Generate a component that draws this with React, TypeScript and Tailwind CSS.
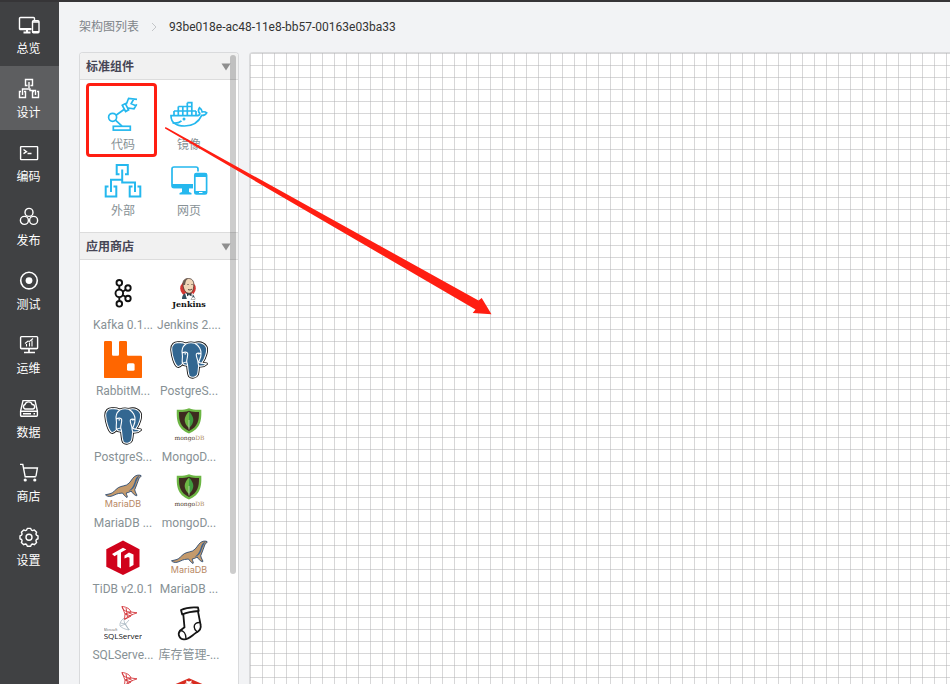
import { useState } from "react";
import type { ReactNode } from "react";

/* ---------- sidebar icons (22 x 22) ---------- */

function NavSvg({ children }: { children: ReactNode }) {
  return (
    <svg viewBox="0 0 22 22" className="h-[22px] w-[22px]" fill="none" stroke="#fff" strokeWidth="1.4" aria-hidden="true">
      {children}
    </svg>
  );
}

const OverviewIcon = () => (
  <NavSvg>
    <path d="M13 15.5H2.5a1 1 0 0 1-1-1V4.500a1 1 0 0 1 1-1h13a1 1 0 0 1 1 1V6" />
    <path d="M2 15h11.500M9 15v3M5.500 18.500h7" strokeWidth="2" />
    <rect x="14.500" y="6.700" width="6.500" height="12" rx="1" />
    <path d="M15 8h6M15 17.600h6" />
  </NavSvg>
);

const DesignIcon = () => (
  <NavSvg>
    <path d="M9.500 7.500h-2v-6h7v6h-2M11 4v6M4.500 17v-6h7.500v1.500h5.500V17" />
    <path d="M3 13.500H1.500v6h6v-6H6M16 13.500h-1.500v6h6v-6H19" />
  </NavSvg>
);

const CodeIcon = () => (
  <NavSvg>
    <rect x="2.600" y="4.600" width="17" height="13" rx="0.500" />
    <path d="M5.500 7.500l3 2.200-3 2M9.500 11.500h4" />
  </NavSvg>
);

const ReleaseIcon = () => (
  <NavSvg>
    <circle cx="11" cy="6.400" r="4" />
    <circle cx="6.400" cy="14.400" r="4" />
    <circle cx="15.600" cy="14.400" r="4" />
  </NavSvg>
);

const TestIcon = () => (
  <NavSvg>
    <circle cx="11" cy="10.600" r="8.300" strokeWidth="1.600" />
    <circle cx="11" cy="10.600" r="3.400" fill="#fff" stroke="none" />
  </NavSvg>
);

const OpsIcon = () => (
  <NavSvg>
    <rect x="2.600" y="2.600" width="17" height="12" rx="0.800" />
    <path d="M3 14.500h16M11 15v3M6 18.500h11" strokeWidth="1.700" />
    <path d="M8.500 12.500v-2.500M11.500 12.500V8.500M14 12.500V6.500M7 9.500l3-2.500 1.500.5L15 4.500" strokeWidth="1.100" />
  </NavSvg>
);

const DataIcon = () => (
  <NavSvg>
    <path d="M5 2.600h12l2.400 10.400v4.200a1 1 0 0 1-1 1H3.600a1 1 0 0 1-1-1V13z" />
    <path d="M2.800 13.300h16.400M5 15.800h8M15.500 15.800h1.500" />
    <path d="M7 11a2.400 2.400 0 0 1 0-4.500 3.800 3.800 0 0 1 7.200 0A2.300 2.300 0 0 1 15 11z" />
  </NavSvg>
);

const CartIcon = () => (
  <NavSvg>
    <path d="M2 2.400h2.800l2.400 12.400h10.600M5.800 6h13.600l-1.500 8.500" />
    <circle cx="7.200" cy="18" r="1.600" fill="#fff" stroke="none" />
    <circle cx="16.800" cy="18" r="1.600" fill="#fff" stroke="none" />
  </NavSvg>
);

const GearIcon = () => (
  <NavSvg>
    <path
      d="M9.300 2.400h3.400l.7 1.700 1.200.5 1.700-.7 2.300 2.300-.7 1.700.5 1.200 1.600.7v3l-1.600.7-.5 1.200.7 1.700-2.300 2.300-1.700-.7-1.200.5-.7 1.700H9.300l-.7-1.700-1.200-.5-1.700.7-2.300-2.300.7-1.700-.5-1.200-1.600-.7v-3l1.600-.7.5-1.200-.7-1.700 2.300-2.300 1.700.7 1.200-.5z"
      strokeLinejoin="round"
    />
    <circle cx="11" cy="11.200" r="3" />
  </NavSvg>
);

/* ---------- component icons (38 x 38) ---------- */

function Art({ children }: { children: ReactNode }) {
  return (
    <svg viewBox="0 0 38 38" className="h-[38px] w-[38px]" fill="none" aria-hidden="true">
      {children}
    </svg>
  );
}

const RobotArm = () => (
  <Art>
    <g stroke="#25b8ee" strokeWidth="1.700">
      <rect x="9.300" y="31.300" width="17" height="3.800" />
      <circle cx="8.600" cy="22.300" r="4" />
      <path d="M11.500 25.200l6.500 6M12 20.200l8-5.700" />
      <path d="M18.300 10.300l3-1.700 3.300 6.200-3 1.700z" />
      <path d="M22.300 9.300L24.600 3.300l8.400 1M24 13l6 .8 2.700-4.500M29.500 4.500l-2.300 4.200 4.600 2" />
    </g>
  </Art>
);

const Docker = () => (
  <Art>
    <g stroke="#25b8ee" strokeWidth="1.700">
      <path d="M4 16h22M8.300 11.500h13.500M17.300 7.700h4.500v12.500M17.300 7.700v12.500M12.800 11.500v8.700M8.300 11.500v8.700M4 16v4.500M26 16v4.500" />
      <path d="M1 20.700h25.500c2.200 0 3.300-1 3.300-2.300-1.500-1.600-1.500-4-.3-5.700 2 1.300 2.500 2.700 2.700 4.300 1.500-.4 3.300-.2 4.500.8-1 2-3 2.700-5 2.600C28.500 27.500 22.500 31 14.500 31 6 31 1 27.300 1 20.700z" />
      <path d="M2.500 28c4 .5 7-.4 9-2.200" />
    </g>
    <circle cx="14" cy="23.900" r="1.500" fill="#25b8ee" />
  </Art>
);

const Network = () => (
  <Art>
    <g stroke="#25b8ee" strokeWidth="2">
      <path d="M15.500 13.300H12.700V4h11.100v9.300H21M18.200 8.500V21.500H31V31M18.200 18.700H7V31" />
      <path d="M4.500 25.500H1.700v10h10.600v-10H9.500M28.500 25.500h-2.800v10h10.600v-10H33.500" />
    </g>
  </Art>
);

const WebPage = () => (
  <Art>
    <path d="M23 26.500H4A2 2 0 0 1 2 24.500V8a2 2 0 0 1 2-2h22a2 2 0 0 1 2 2v2.500" stroke="#25b8ee" strokeWidth="1.700" />
    <path d="M2 23h21v4.300H3.500L2 26zM12 27h7v4l2.500 1v1.500h-12V32l2.500-1z" fill="#25b8ee" />
    <rect x="24.800" y="12.500" width="11.800" height="20.500" rx="1.500" stroke="#25b8ee" strokeWidth="1.700" />
    <path d="M25 12.500h11.500v3.500H25zM25 30h11.500v3H25z" fill="#25b8ee" />
    <path d="M29 31.500h3.500" stroke="#fff" />
  </Art>
);

const Kafka = () => (
  <Art>
    <g stroke="#111" strokeWidth="1.900">
      <path d="M15.300 11v3M15.300 22.500v3M19 16.500l2.500-1.700M19 20.200l2.500 1.600" />
      <circle cx="15.300" cy="7.800" r="2.800" />
      <circle cx="15.300" cy="18.300" r="3.800" />
      <circle cx="15.300" cy="28.800" r="2.800" />
      <circle cx="24" cy="13" r="2.700" />
      <circle cx="24" cy="23.500" r="2.700" />
    </g>
  </Art>
);

const Jenkins = () => (
  <Art>
    <circle cx="18" cy="13.500" r="7.800" fill="#d33833" />
    <path d="M12 24c0-4 2-6 6-6s6.500 2 7 6z" fill="#335061" />
    <path d="M13 9.500C12.500 5.500 15 3.500 18.500 3.500s5.500 2.500 5.300 6.500c-.1 4.500-1.500 8-4.500 8.300-3.800.2-6-4-6.300-8.800z" fill="#f0d6b7" stroke="#4b3a34" strokeWidth=".8" />
    <path d="M13 10c-.5-4 2-6.700 5.500-6.500-2.500 1-3 3-3.500 6.500z" fill="#6b5a50" />
    <path d="M17.500 9.500h1M21.500 9.500h1M18 14.500c1.500.8 3 .5 4-.5" stroke="#3b2b26" strokeWidth=".9" />
    <path d="M15 18l4 2 4-2-1 6.500h-5z" fill="#fff" />
    <path d="M17 18.500l2 1.200 2.500-1.400v2.900L19 20l-2 1.200z" fill="#28323a" />
    <path d="M22 22.500c2-1 3.500 0 3 2h-4z" fill="#fff" stroke="#555" strokeWidth=".4" />
    <text x="19" y="32" textAnchor="middle" fill="#111" className="font-['DejaVu_Serif',serif] text-[8px] font-bold">Jenkins</text>
  </Art>
);

const Rabbit = () => (
  <Art>
    <path d="M1.200 0h5.600Q8 0 8 1.200v12.300q0 1.200 1.200 1.200h4.600q1.200 0 1.200-1.200V1.200Q15 0 16.200 0h5.600Q23 0 23 1.200v12.300q0 1.200 1.200 1.200h12.600q1.200 0 1.200 1.200v20q0 1.200-1.200 1.200H1.200Q0 37.100 0 35.900V1.200Q0 0 1.200 0z" fill="#ff6600" />
    <rect x="23" y="22.300" width="7.600" height="7.400" rx="1.500" fill="#fff" />
  </Art>
);

const elephant =
  "M9 1.700C4.500 1.200 1.500 3.500 1.700 9c.4 6 3 14.500 5.800 16.300C9.300 26 11 24.500 12.500 22.500c1 1.500 3.500 1.800 5 1.600.6 3.900.5 8.900 2 11 2 2 6.500 1.500 8-1.600.9-3 .7-6 1.200-8.500 3 .5 6-.3 7.800-2.200-1.500-.4-3.500.1-4.700-.8 3.700-5 6-13 4.200-16.300C33 1.300 28.500 1.200 24.700 2.300c-3-.8-6.200-.6-8.900.7C13.500 2 11 1.500 9 1.700z";

const Postgres = () => (
  <Art>
    <path d={elephant} fill="#000" stroke="#111" strokeWidth="2.800" strokeLinejoin="round" />
    <path d={elephant} fill="#336791" stroke="#fff" strokeWidth="1.100" />
    <path
      d="M15.800 3C12 6 11.500 10 12.300 13.500c.7 3-.8 6 .2 9M12.300 12c2-1.300 4.700-1.200 5.300.2.700 3-1.100 5.800-.9 8.300.2 1.600.8 2.600.8 3.600M12.500 22.500c1.500-1 2.700-1.500 4-1.500M24.700 2.300C29 4.500 31.500 9 31 13c-2-1.300-4.300-1-4.700.2-.5 2.800 1.700 5.300 1.700 8 0 1.500.5 2.500.7 3.800M31 13c.3 3.500-2 6-2.200 8.200 1.200 1.200 2 .8 3.200 1"
      stroke="#fff"
      strokeWidth="1.100"
    />
    <path d="M14.500 12.800h1.500M28 12.900h1.500" stroke="#fff" strokeWidth="1.300" />
  </Art>
);

const Mongo = () => (
  <Art>
    <path d="M19 1.300c4 1.500 8 1.700 12.300 1.400.3 10-.3 18.800-12.300 23.800C7 21.500 6.500 12.700 6.800 2.700 11 3 15 2.800 19 1.300z" fill="#6cb644" />
    <path d="M19 3.700c3.500 1.200 6.500 1.400 10 1.300.1 8.500-1 14.700-10 19-9-4.300-10.200-10.500-10-19 3.500.1 6.500-.1 10-1.300z" fill="#3d2b1f" />
    <path d="M19 4.500c-5.500 5.500-6 11 0 16.500z" fill="#6cb644" />
    <path d="M19 4.500c5.500 5.500 6 11 0 16.500z" fill="#3f9a3f" />
    <path d="M19 13v9.500" stroke="#c8d8b8" strokeWidth=".8" />
    <text x="19.500" y="33" textAnchor="middle" fill="#4a3528" className="font-['DejaVu_Serif',serif] text-[6px]">
      mongo<tspan fill="#b08a60">DB</tspan>
    </text>
  </Art>
);

const Maria = () => (
  <Art>
    <path
      d="M37 2.500c-2.500-1-5 0-6.500 1-3 2.500-4 6.500-8 8.500-4 1.500-7.500 1.200-10.500 4.500-2.500 2.500-4 4-7 4.500l-3.500.8c1 1.200 3 2 5.500 1.500 3-.8 5-2.300 7.500-2.800l4-.5c1 1.500 2.500 3.500 4.500 4.500 1-.5-.5-2.500-.8-4.500 1.800-.3 3.500-1 5-2 1 1.700 3 4.200 5.500 4.800 1-.5-1.500-3-2-6 2-4 2.800-8.300 4.500-12 1-.4 2-1 1.800-2.300z"
      fill="#c49a6c"
      stroke="#2b4b72"
      strokeWidth=".9"
    />
    <path d="M35.500 3c-3 0-4 3-5 6.500-1.200 4-3.500 7-6 8.500 4-1 6-3.500 7-7 1.200-3.500 2.200-6 4-8z" fill="#3c6390" />
    <text x="19" y="34" textAnchor="middle" fill="#b88863" className="font-['Inter',sans-serif] text-[9px]">MariaDB</text>
  </Art>
);

const TiDB = () => (
  <Art>
    <path d="M19 1.500l16.500 8.700v17.500L19 36 2.300 27.700V10.200z" fill="#d0021b" />
    <path d="M8 15l11-6.200 3.300 1.800-5.300 3v16l-3.700-2V15.600L10.500 17.200zM20.500 16.500l4.500-3 4.500 2V26l-4 2.300v-9.500L24 18l-3.500 1.500z" fill="#fff" />
  </Art>
);

const SqlServer = () => (
  <Art>
    <g stroke="#d4373b" strokeWidth=".9">
      <path d="M18 1.500c5 .5 8 2.500 9 5.500l6 .8c-5 1.700-9 4-12.500 6.500M18 1.500c1 4 4 5.500 9 5.500M18 1.500l3 7.500 6-2M21 9l-.5 5.500L27 11l-6-2M22 3l1 5M25 8l3.500 1.500M23.500 12l-1-4" />
    </g>
    <path d="M20 13c-3 2.500-4.500 5-4 8M20 14c0 4 1.500 7 5.500 11M16 21c2 2 5 3.300 9 4M16.500 18l5 1-5 2M25 15l-3.500 4 3.500 6" stroke="#9fb0bc" strokeWidth=".7" />
    <text x="0" y="26" fill="#555" className="font-['Open_Sans',sans-serif] text-[3px]">Microsoft</text>
    <text x="19" y="34" textAnchor="middle" fill="#111" className="font-['Open_Sans',sans-serif] text-[8px]">SQLServer</text>
  </Art>
);

const Sock = () => (
  <Art>
    <g stroke="#151515" strokeWidth="1.800" strokeLinejoin="round" strokeLinecap="round">
      <path d="M11 5c5-2.500 11-3 17-2.500l.7 3.500c-6 .3-11.500 1.300-16.500 3.500z" />
      <path d="M13.300 9.300l1.200 13-4.500 3.500c-3 3.500 0 9 4.500 8.500 4.500 0 7-3.500 11.500-6.500 4-2 5.500-4.500 4.500-8.500L28 6.500" />
      <path d="M10 25.500c3.500 0 6 3 6 8M30 17.500c-3.500-.3-6 1.500-5.800 4.500.1 2 1.300 3.800 3 5" strokeWidth="1.400" />
    </g>
  </Art>
);

const Redis = () => (
  <Art>
    <path d="M5 13.500v18L19 38l14.500-6.500v-18z" fill="#a41e11" />
    <path d="M4.500 13.500L19 7.200l14.500 6.300L19 20z" fill="#d82c20" />
    <path d="M16 9.500l3 1 3-1-1 2 2 1-3 .3-1 2-1.500-2-3-.3 2-1z" fill="#fff" />
    <ellipse cx="13.500" cy="14.500" rx="3.500" ry="1.500" fill="#fff" />
  </Art>
);

/* ---------- data ---------- */

const navItems = [
  { label: "总览", Icon: OverviewIcon },
  { label: "设计", Icon: DesignIcon },
  { label: "编码", Icon: CodeIcon },
  { label: "发布", Icon: ReleaseIcon },
  { label: "测试", Icon: TestIcon },
  { label: "运维", Icon: OpsIcon },
  { label: "数据", Icon: DataIcon },
  { label: "商店", Icon: CartIcon },
  { label: "设置", Icon: GearIcon },
];

type Item = { label: string; Icon: () => ReactNode; marked?: boolean };

const standard: Item[] = [
  { label: "代码", Icon: RobotArm, marked: true },
  { label: "镜像", Icon: Docker },
  { label: "外部", Icon: Network },
  { label: "网页", Icon: WebPage },
];

const store: Item[] = [
  { label: "Kafka 0.1...", Icon: Kafka },
  { label: "Jenkins 2....", Icon: Jenkins },
  { label: "RabbitM...", Icon: Rabbit },
  { label: "PostgreS...", Icon: Postgres },
  { label: "PostgreS...", Icon: Postgres },
  { label: "MongoD...", Icon: Mongo },
  { label: "MariaDB ...", Icon: Maria },
  { label: "mongoD...", Icon: Mongo },
  { label: "TiDB v2.0.1", Icon: TiDB },
  { label: "MariaDB ...", Icon: Maria },
  { label: "SQLServe...", Icon: SqlServer },
  { label: "库存管理-...", Icon: Sock },
  { label: "", Icon: SqlServer },
  { label: "", Icon: Redis },
];

function Section({ title, items }: { title: string; items: Item[] }) {
  const [open, setOpen] = useState(true);
  return (
    <section className="border-b border-[#dcdcdc]">
      <button
        type="button"
        aria-expanded={open}
        onClick={() => setOpen(!open)}
        className="flex h-[27px] w-full items-center justify-between border-b border-[#dcdcdc] bg-[#f1f1f1] pt-0.5 pr-[7px] pl-1.5 font-bold text-[#464555]"
      >
        {title}
        <svg viewBox="0 0 10 8" className="h-2 w-2.5" aria-hidden="true">
          <path d="M0.500 0.500h9L5 7.500z" fill="#8f8f8f" />
        </svg>
      </button>
      {open && (
        <div className="grid grid-cols-[66px_66px] px-2.5 pt-[15px] pb-[5px]">
          {items.map(({ label, Icon, marked }, i) => (
            <button key={i} type="button" className="relative flex h-[66px] flex-col items-center gap-0.5 text-[#879195]">
              <Icon />
              <span className="leading-5 whitespace-nowrap">{label}</span>
              {marked && (
                <span className="pointer-events-none absolute -top-3 -left-1 h-[74px] w-[71px] rounded-[4px] border-3 border-[#ff1e12]" />
              )}
            </button>
          ))}
        </div>
      )}
    </section>
  );
}

export default function App() {
  return (
    <div className="relative flex h-screen flex-col overflow-hidden bg-[#f2f3f5] font-['Roboto','Noto_Sans_CJK_SC',sans-serif] text-xs">
      <div className="h-0.5 shrink-0 bg-[#363537]" />
      <div className="flex min-h-0 flex-1">
        <nav className="w-[59px] shrink-0 bg-[#404143]">
          {navItems.map(({ label, Icon }) => (
            <a
              key={label}
              href="#"
              aria-current={label === "设计" ? "page" : undefined}
              className="flex h-16 flex-col items-center gap-[3px] pt-3 pr-0.5 leading-5 text-white aria-[current=page]:bg-[#5d5e60]"
            >
              <Icon />
              {label}
            </a>
          ))}
        </nav>

        <div className="flex min-w-0 flex-1 flex-col pl-5">
          <div className="flex h-[50px] shrink-0 items-center gap-3">
            <a href="#" className="text-[#7f858a]">架构图列表</a>
            <svg viewBox="0 0 6 10" className="h-2.5 w-1.5" fill="none" stroke="#c4c6c9" aria-hidden="true">
              <path d="M1 1l4 4-4 4" />
            </svg>
            <span className="text-[#333]">93be018e-ac48-11e8-bb57-00163e03ba33</span>
          </div>

          <main className="flex min-h-0 flex-1 gap-2.5">
            <aside className="relative w-40 shrink-0 overflow-hidden rounded-t-[4px] border border-b-0 border-[#d9dadc] bg-white">
              <Section title="标准组件" items={standard} />
              <Section title="应用商店" items={store} />
              <div className="absolute top-0.5 right-0.5 h-[519px] w-1.5 rounded-full bg-black/20" />
            </aside>
            <div className="min-w-0 flex-1 rounded-tl-[4px] border-t border-l border-[#d9dadc] bg-white bg-[linear-gradient(to_right,rgba(176,176,178,0.5)_1px,transparent_1px),linear-gradient(to_bottom,rgba(176,176,178,0.5)_1px,transparent_1px)] bg-[size:12px_12px]" />
          </main>
        </div>
      </div>

      <svg viewBox="0 0 330 190" className="pointer-events-none absolute top-[126px] left-[164px] h-[190px] w-[330px]" aria-hidden="true">
        <path d="M1 1.200L2.500 1.500 314.500 174.500 317.700 172 327.500 188.200 308.700 187 311.500 183.500 1 2.500z" fill="#ff1e12" />
      </svg>
    </div>
  );
}
